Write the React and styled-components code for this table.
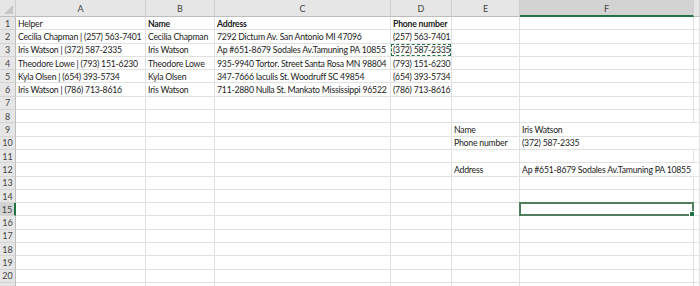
import React from "react";
import styled, { createGlobalStyle } from "styled-components";

const GlobalStyle = createGlobalStyle`
  html, body {
    margin: 0;
    padding: 0;
    background: #ffffff;
  }
  body {
    font-family: Lato, "Liberation Sans", sans-serif;
  }
`;

const COLS = [
  { key: "A", width: 130 },
  { key: "B", width: 69 },
  { key: "C", width: 176 },
  { key: "D", width: 61 },
  { key: "E", width: 68 },
  { key: "F", width: 174 },
  { key: "", width: 6 },
];

const ROW_COUNT = 21;
const SELECTED_COL = "F";
const SELECTED_ROW = 15;

const data = {
  1: { A: "Helper", B: "Name", C: "Address", D: "Phone number" },
  2: {
    A: "Cecilia Chapman | (257) 563-7401",
    B: "Cecilia Chapman",
    C: "7292 Dictum Av. San Antonio MI 47096",
    D: "(257) 563-7401",
  },
  3: {
    A: "Iris Watson | (372) 587-2335",
    B: "Iris Watson",
    C: "Ap #651-8679 Sodales Av.Tamuning PA 10855",
    D: "(372) 587-2335",
  },
  4: {
    A: "Theodore Lowe | (793) 151-6230",
    B: "Theodore Lowe",
    C: "935-9940 Tortor. Street Santa Rosa MN 98804",
    D: "(793) 151-6230",
  },
  5: {
    A: "Kyla Olsen | (654) 393-5734",
    B: "Kyla Olsen",
    C: "347-7666 Iaculis St. Woodruff SC 49854",
    D: "(654) 393-5734",
  },
  6: {
    A: "Iris Watson | (786) 713-8616",
    B: "Iris Watson",
    C: "711-2880 Nulla St. Mankato Mississippi 96522",
    D: "(786) 713-8616",
  },
  9: { E: "Name", F: "Iris Watson" },
  10: { E: "Phone number", F: "(372) 587-2335" },
  12: { E: "Address", F: "Ap #651-8679 Sodales Av.Tamuning PA 10855" },
};

const boldCells = ["1B", "1C", "1D"];
const copiedCell = "3D";

const Sheet = styled.div`
  display: grid;
  grid-template-columns: 16px ${COLS.map((c) => `${c.width}px`).join(" ")};
  grid-template-rows: 17px repeat(${ROW_COUNT}, 13.3px);
  width: 700px;
  height: 286px;
  overflow: hidden;
  font-size: 8.7px;
  color: #222;
`;

const Corner = styled.div`
  position: relative;
  background: #e6e6e6;
  border-right: 1px solid #cfcfcf;
  border-bottom: 1px solid #bdbdbd;
  box-sizing: border-box;

  &::after {
    content: "";
    position: absolute;
    right: 2px;
    bottom: 2px;
    border-left: 9px solid transparent;
    border-bottom: 9px solid #c6c6c6;
  }
`;

const ColHeader = styled.div`
  display: flex;
  align-items: center;
  justify-content: center;
  box-sizing: border-box;
  background: ${(p) => (p.$active ? "#d3d3d3" : "#e6e6e6")};
  border-right: 1px solid #cfcfcf;
  border-bottom: ${(p) => (p.$active ? "2px solid #217346" : "1px solid #bdbdbd")};
  color: #444;
  font-size: 9px;
  padding-top: 1px;
`;

const RowHeader = styled.div`
  display: flex;
  align-items: center;
  justify-content: center;
  box-sizing: border-box;
  background: ${(p) => (p.$active ? "#d3d3d3" : "#e6e6e6")};
  border-right: ${(p) => (p.$active ? "2px solid #217346" : "1px solid #bdbdbd")};
  border-bottom: 1px solid #d4d4d4;
  color: #444;
  font-size: 9px;
`;

const Cell = styled.div`
  position: relative;
  display: flex;
  align-items: center;
  box-sizing: border-box;
  padding-left: 2px;
  white-space: nowrap;
  letter-spacing: -0.22px;
  overflow: ${(p) => (p.$open ? "visible" : "hidden")};
  border-right: ${(p) => (p.$open ? "1px solid transparent" : "1px solid #e1e1e1")};
  border-bottom: 1px solid #e1e1e1;
  font-weight: ${(p) => (p.$bold ? 700 : 400)};
  z-index: ${(p) => (p.$hasText ? 1 : 0)};
`;

const CopyMarquee = styled.div`
  position: absolute;
  left: 0;
  top: 0;
  right: 0;
  bottom: 0;
  border: 1px dashed #217346;
  pointer-events: none;
`;

const Selection = styled.div`
  position: absolute;
  left: -1px;
  top: -1px;
  right: -1px;
  bottom: -1px;
  border: 2px solid #4f7d5e;
  pointer-events: none;

  &::after {
    content: "";
    position: absolute;
    right: -3px;
    bottom: -3px;
    width: 4px;
    height: 4px;
    background: #217346;
    border: 1px solid #fff;
  }
`;

const CellText = styled.span`
  position: relative;
`;

function App() {
  const rows = [];
  for (let r = 1; r <= ROW_COUNT; r++) {
    rows.push(r);
  }

  return (
    <>
      <GlobalStyle />
      <Sheet>
        <Corner />
        {COLS.map((c) => (
          <ColHeader key={"h" + c.key + c.width} $active={c.key === SELECTED_COL}>
            {c.key}
          </ColHeader>
        ))}
        {rows.map((r) => {
          const rowData = data[r] || {};
          return (
            <React.Fragment key={r}>
              {/* last row only peeks in at the bottom edge, its number is off-screen */}
              <RowHeader $active={r === SELECTED_ROW}>{r < ROW_COUNT ? r : ""}</RowHeader>
              {COLS.map((c, i) => {
                const id = `${r}${c.key}`;
                const text = rowData[c.key];
                const next = COLS[i + 1];
                const open = !!text && !!next && !rowData[next.key] && c.key === "F";
                const selected = c.key === SELECTED_COL && r === SELECTED_ROW;
                return (
                  <Cell
                    key={id + i}
                    $bold={boldCells.includes(id)}
                    $hasText={!!text || selected}
                    $open={open || selected}
                  >
                    {text && <CellText>{text}</CellText>}
                    {id === copiedCell && <CopyMarquee />}
                    {selected && <Selection />}
                  </Cell>
                );
              })}
            </React.Fragment>
          );
        })}
      </Sheet>
    </>
  );
}

export default App;
